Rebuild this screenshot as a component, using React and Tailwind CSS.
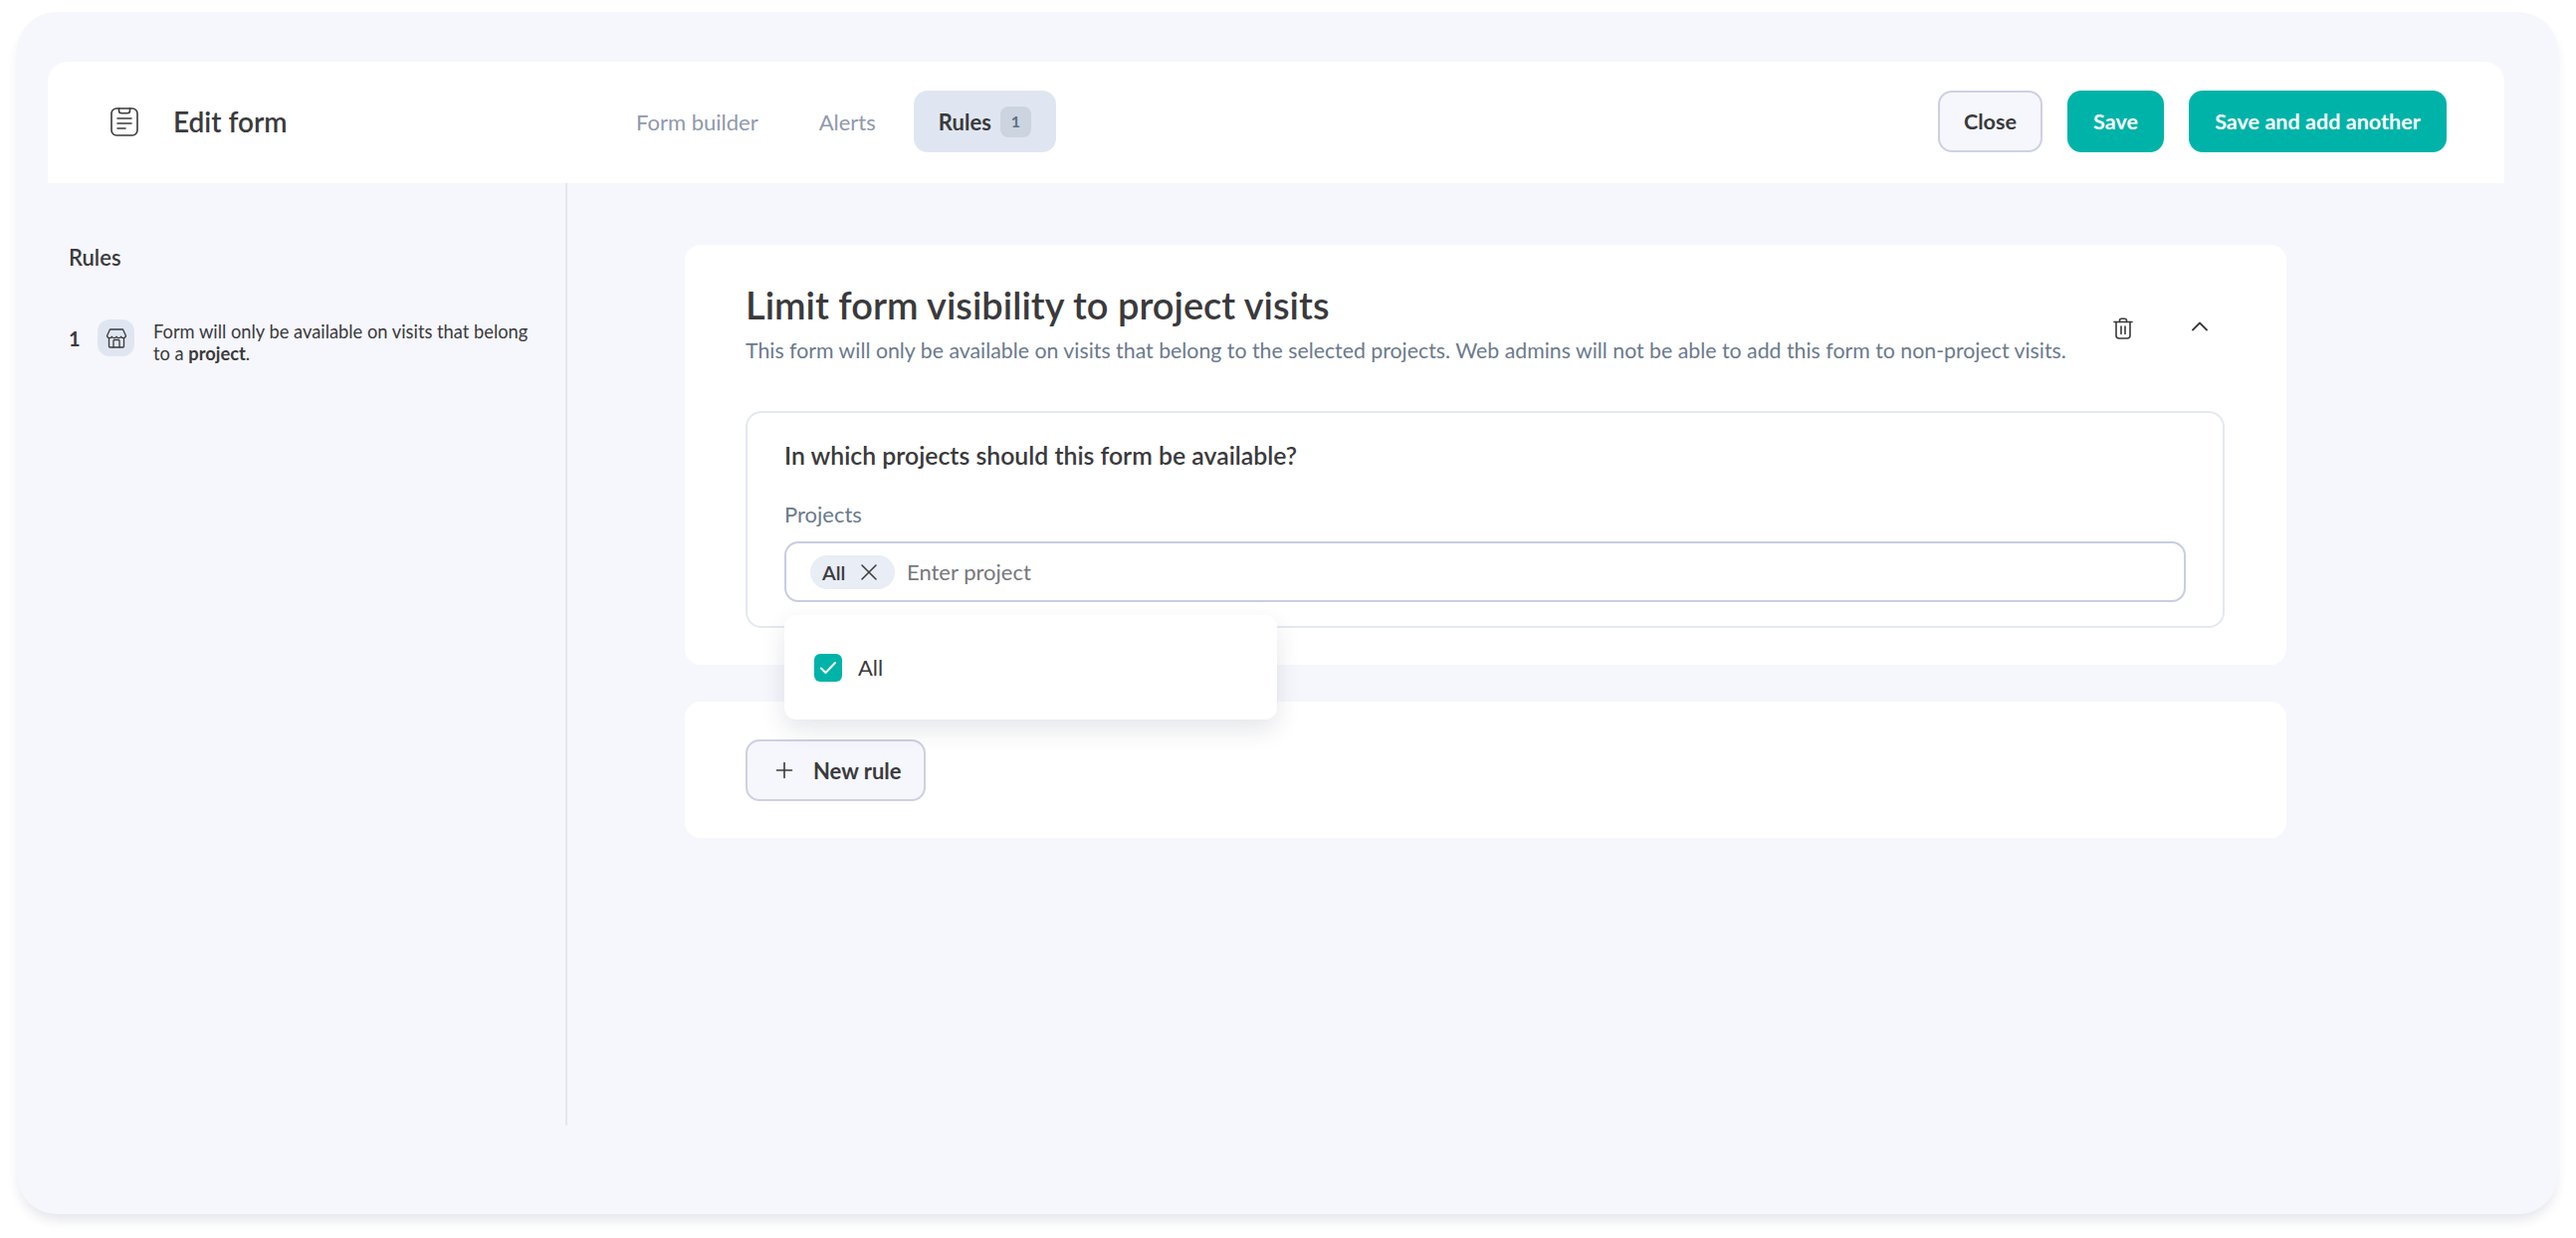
const Font = { fontFamily: "Lato, sans-serif" };

function ClipIcon() {
  return (
    <svg width="30" height="30" viewBox="0 0 30 30" fill="none" stroke="#3a3a3c" strokeWidth="1.6" strokeLinecap="round" strokeLinejoin="round">
      <rect x="2" y="2" width="26" height="27" rx="5" />
      <path d="M9.500 2v2.200a2.500 2.500 0 0 0 2.500 2.500h6a2.500 2.500 0 0 0 2.500-2.500V2" />
      <path d="M8 12h14M8 17h14M8 22h8" />
    </svg>
  );
}

function StoreIcon() {
  return (
    <svg width="22" height="22" viewBox="0 0 22 22" fill="none" stroke="#3a3a3c" strokeWidth="1.3" strokeLinejoin="round" strokeLinecap="round">
      <path d="M4.500 2h13l3 6.500a2.600 2.600 0 0 1-4.800.8 2.700 2.700 0 0 1-4.700 0 2.700 2.700 0 0 1-4.700 0 2.600 2.600 0 0 1-4.800-.8z" />
      <path d="M3.500 11v8a1 1 0 0 0 1 1h13a1 1 0 0 0 1-1v-8" />
      <path d="M8 20v-6.500a1 1 0 0 1 1-1h4a1 1 0 0 1 1 1V20" />
    </svg>
  );
}

function TrashIcon() {
  return (
    <svg width="20" height="22" viewBox="0 0 20 22" fill="none" stroke="#3a3a3c" strokeWidth="1.6" strokeLinecap="round" strokeLinejoin="round">
      <path d="M1 4.500h18" />
      <path d="M6.500 4.500V3a1.800 1.800 0 0 1 1.800-1.800h3.400A1.800 1.800 0 0 1 13.500 3v1.500" />
      <path d="M3 4.500V18a3 3 0 0 0 3 3h8a3 3 0 0 0 3-3V4.500" />
      <path d="M8 9v7.500M12 9v7.500" />
    </svg>
  );
}

function Chevron() {
  return (
    <svg width="18" height="12" viewBox="0 0 18 12" fill="none" stroke="#3a3a3c" strokeWidth="1.8" strokeLinecap="round" strokeLinejoin="round">
      <path d="M2 9.500 9 2.500l7 7" />
    </svg>
  );
}

function Cross() {
  return (
    <svg width="16" height="16" viewBox="0 0 16 16" fill="none" stroke="#3a3a3c" strokeWidth="1.5" strokeLinecap="round">
      <path d="M1 1l14 14M15 1 1 15" />
    </svg>
  );
}

function Plus() {
  return (
    <svg width="18" height="18" viewBox="0 0 18 18" fill="none" stroke="#3a3a3c" strokeWidth="1.6" strokeLinecap="round">
      <path d="M9 1.500v15M1.500 9h15" />
    </svg>
  );
}

function Check() {
  return (
    <svg width="18" height="14" viewBox="0 0 18 14" fill="none" stroke="#ffffff" strokeWidth="2" strokeLinecap="round" strokeLinejoin="round">
      <path d="M2 7.500 6.500 12 16 2" />
    </svg>
  );
}

export default function App() {
  return (
    <div style={Font} className="h-[1244px] w-full bg-white pt-[12px] pl-[17px] pr-[18px] text-[#3a3a3c]">
      <div className="h-[1208px] rounded-[40px] bg-[#f6f7fc] pt-[50px] pl-[31px] pr-[54px] shadow-[0_8px_12px_-2px_rgba(40,50,80,0.12)]">
        <header className="flex h-[122px] items-center rounded-t-[20px] bg-white pb-[2px] pl-[62px] pr-[58px]">
          <div className="flex w-[509px] items-center gap-[34px]">
            <ClipIcon />
            <h1 className="text-[28px] font-semibold leading-none">Edit form</h1>
          </div>
          <nav className="flex items-center">
            <span className="px-[20px] text-[22px] text-[#8f98ad]">Form builder</span>
            <span className="ml-[21px] px-[20px] text-[22px] text-[#8f98ad]">Alerts</span>
            <span className="ml-[18px] flex h-[62px] items-center gap-[9px] rounded-[14px] bg-[#e0e6f1] px-[25px] text-[22px] font-bold">
              Rules
              <span className="flex h-[31px] w-[31px] items-center justify-center rounded-[8px] bg-[#ccd4e0] text-[16px] font-bold text-[#5d7087]">1</span>
            </span>
          </nav>
          <div className="ml-auto flex items-center gap-[25px]">
            <button className="h-[62px] w-[105px] rounded-[14px] border-2 border-[#cdd0e5] bg-[#f6f7fc] text-[21.6px] font-bold">Close</button>
            <button className="h-[62px] w-[97px] rounded-[14px] bg-[#00b3a8] text-[21.6px] font-bold text-white">Save</button>
            <button className="h-[62px] w-[259px] rounded-[14px] bg-[#00b3a8] text-[21.6px] font-bold text-white">Save and add another</button>
          </div>
        </header>

        <div className="flex h-[947px]">
          <aside className="w-[522px] shrink-0 border-r-2 border-[#e2e7f1] pl-[21px] pr-[30px] pt-[61px]">
            <h2 className="text-[22px] font-semibold leading-[28px]">Rules</h2>
            <div className="mt-[48px] flex items-start">
              <span className="mt-[7px] w-[29px] shrink-0 text-[20px] font-bold leading-[24px]">1</span>
              <span className="flex h-[37px] w-[37px] shrink-0 items-center justify-center rounded-[12px] bg-[#e0e6f1]"><StoreIcon /></span>
              <p className="ml-[19px] mt-[1px] text-[18.3px] leading-[22px] text-[#3a3a3c]">
                Form will only be available on visits that belong to a <b className="font-bold">project</b>.
              </p>
            </div>
          </aside>

          <main className="flex-1 pl-[118px] pt-[62px]">
            <section className="relative h-[422px] w-[1609px] rounded-[16px] bg-white pl-[61px] pr-[62px] pt-[38px]">
              <div className="flex items-start justify-between">
                <div>
                  <h2 className="text-[38px] font-semibold leading-[44px]">Limit form visibility to project visits</h2>
                  <p className="mt-[9px] whitespace-nowrap text-[21.3px] leading-[30px] text-[#6b7a8d]">
                    This form will only be available on visits that belong to the selected projects. Web admins will not be able to add this form to non-project visits.
                  </p>
                </div>
                <div className="mr-[16px] mt-[35px] flex items-start gap-[58px]">
                  <TrashIcon />
                  <span className="mt-[3px]"><Chevron /></span>
                </div>
              </div>

              <div className="mt-[46px] h-[218px] rounded-[16px] border-2 border-[#e4e8f2] px-[37px] pt-[26px]">
                <h3 className="text-[24.8px] font-semibold leading-[34px]">In which projects should this form be available?</h3>
                <label className="mt-[27px] block text-[22px] leading-[30px] text-[#6b7a8d]">Projects</label>
                <div className="mt-[12px] flex h-[61px] items-center gap-[12px] rounded-[14px] border-2 border-[#c9cde3] bg-white px-[24px]">
                  <span className="flex h-[34px] w-[85px] items-center gap-[16px] rounded-[17px] bg-[#e9edf5] pl-[12px] text-[20px] font-semibold">
                    All
                    <Cross />
                  </span>
                  <span className="text-[22px] text-[#77787c]">Enter project</span>
                </div>
              </div>

              <div className="absolute left-[100px] top-[372px] z-10 flex h-[105px] w-[495px] items-center gap-[16px] rounded-[12px] bg-white pl-[30px] shadow-[0_10px_24px_rgba(40,50,80,0.12)]">
                <span className="flex h-[28px] w-[28px] items-center justify-center rounded-[6px] bg-[#00b3a8]"><Check /></span>
                <span className="text-[22px]">All</span>
              </div>
            </section>

            <section className="mt-[37px] h-[137px] w-[1609px] rounded-[16px] bg-white pl-[61px] pt-[38px]">
              <button className="flex h-[62px] w-[181px] items-center gap-[20px] rounded-[14px] border-2 border-[#cdd0e5] bg-[#f6f7fc] pl-[28px] text-[22px] font-bold">
                <Plus />
                New rule
              </button>
            </section>
          </main>
        </div>
      </div>
    </div>
  );
}
